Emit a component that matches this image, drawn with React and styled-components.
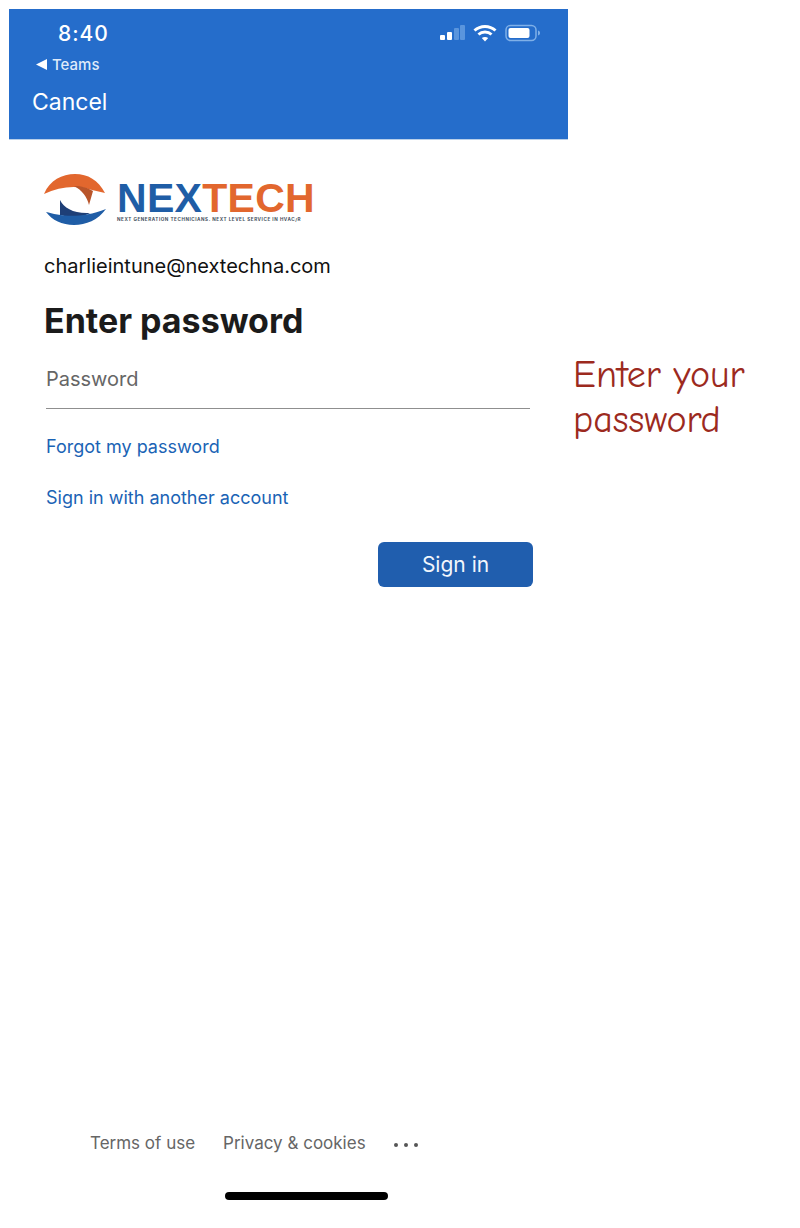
import React from "react";
import styled, { createGlobalStyle } from "styled-components";

const Global = createGlobalStyle`
  html, body { margin: 0; padding: 0; background: #fff; }
  body { font-family: Inter, "Liberation Sans", sans-serif; }
`;
const Page = styled.div`
  width: 800px; height: 1228px; box-sizing: border-box; padding: 9px 0 0 9px;
  display: flex; gap: 5px; overflow: hidden;
`;
const Phone = styled.main`
  width: 559px; flex: none; display: flex; flex-direction: column; height: 1219px;
`;
const Header = styled.header`
  height: 131px; flex: none; background: #256dcb; box-sizing: border-box;
  border-bottom: 1px solid #b9cfe9; color: #fff; display: grid;
  grid-template-rows: 33px 24px 40px; grid-template-columns: 1fr auto;
  padding: 10px 27px 0 0;
`;
const Time = styled.div`
  font-size: 21px; font-weight: 500; letter-spacing: 1px; line-height: 30px; padding-left: 49px;
`;
const StatusIcons = styled.div`
  display: flex; align-items: center; gap: 8px; height: 30px; margin-top: -1px;
`;
const Back = styled.div`
  grid-column: 1 / -1; display: flex; align-items: center; gap: 5px;
  padding-left: 27px; font-size: 15px; font-weight: 500; color: #dfeafa;
`;
const Cancel = styled.div`
  grid-column: 1 / -1; font-size: 23px; line-height: 40px; padding: 6px 0 0 23px; font-weight: 400;
`;
const Content = styled.section`
  flex: 1; display: flex; flex-direction: column; padding: 34px 0 0 35px;
`;
const Logo = styled.div`
  display: flex; gap: 11px; height: 53px; align-items: flex-start;
`;
const LogoText = styled.div`
  display: flex; flex-direction: column; padding-top: 5px;
`;
const Wordmark = styled.div`
  font-family: "Liberation Sans", sans-serif; font-weight: 700; font-size: 41px; line-height: 38px;
  letter-spacing: .3px; color: #1f5da6; white-space: nowrap;
`;
const Orange = styled.span`color: #e2672e;`;
const Tagline = styled.div`
  font-size: 4.6px; font-weight: 700; color: #45505e; letter-spacing: .55px; line-height: 6px; white-space: nowrap;
`;
const Email = styled.div`
  font-size: 20px; line-height: 28px; color: #111; margin-top: 25px;
`;
const Title = styled.h1`
  font-size: 34px; line-height: 42px; font-weight: 700; color: #1b1b1b; margin: 20px 0 0;
`;
const Field = styled.div`
  width: 484px; margin: 21px 0 0 2px; height: 46px; box-sizing: border-box; border-bottom: 1px solid #8f8f8f;
  color: #666; font-size: 20px; line-height: 30px; padding-top: 1px;
`;
const LinkText = styled.a`
  display: block; margin: ${p => p.$top}px 0 0 2px; color: #1a63b5; font-size: 18px; line-height: 26px;
`;
const Actions = styled.div`
  width: 489px; display: flex; justify-content: flex-end; margin-top: 31px;
`;
const SignIn = styled.button`
  width: 155px; height: 45px; border: 0; border-radius: 6px; background: #205eae; color: #f2f6fc;
  font: 400 21px Inter, sans-serif; padding: 0;
`;
const Footer = styled.footer`
  margin-top: auto; display: flex; align-items: center; padding: 0 0 0 46px;
  height: 30px; color: #666; font-size: 17px;
`;
const FooterLink = styled.span`margin-right: 28px;`;
const Dots = styled.div`
  display: flex; gap: 6px; margin-top: 3px;
  & > i { width: 4px; height: 4px; border-radius: 50%; background: #555; }
`;
const HomeArea = styled.div`
  height: 70px; flex: none; display: flex; justify-content: center; padding: 34px 180px 0 0;
  box-sizing: border-box; padding-left: 181px; justify-content: flex-start;
`;
const HomeBar = styled.div`
  width: 198px; height: 8px; border-radius: 4px; background: #000;
`;
const Note = styled.aside`
  font-family: "Comic Sans MS", "Comic Neue", "DejaVu Sans", sans-serif;
  color: #9c2a1e; font-size: 38px; line-height: 45px; padding-top: 344px; width: 220px;
`;

const Signal = () => (
  <svg width="26" height="18" viewBox="0 0 26 18" aria-hidden="true">
    <rect x="1" y="11" width="5" height="5" rx="1" fill="#fff" />
    <rect x="8" y="8" width="5" height="8" rx="1" fill="#fff" />
    <rect x="15" y="4" width="5" height="12" rx="1" fill="#5a95dd" />
    <rect x="21" y="1" width="5" height="15" rx="1" fill="#5a95dd" />
  </svg>
);
const Wifi = () => (
  <svg width="24" height="18" viewBox="0 0 24 18" fill="none" stroke="#fff" strokeWidth="3" aria-hidden="true">
    <path d="M1.5 6.5C7.5 1 16.5 1 22.5 6.5" />
    <path d="M5.5 10.5C9 7.3 15 7.3 18.5 10.5" />
    <path d="M12 17.5L8.8 14C10.6 12.6 13.4 12.6 15.2 14Z" fill="#fff" stroke="none" />
  </svg>
);
const Battery = () => (
  <svg width="36" height="18" viewBox="0 0 36 18" aria-hidden="true">
    <rect x="1" y="1.5" width="30" height="15" rx="4.5" fill="none" stroke="#7fb0e8" strokeWidth="1.5" />
    <rect x="3.5" y="4" width="21" height="10" rx="2" fill="#fff" />
    <path d="M33 6.5c1.6.4 2 1.4 2 2.5s-.4 2.1-2 2.5z" fill="#7fb0e8" />
  </svg>
);
const Mark = () => (
  <svg width="62" height="52" viewBox="0 0 62 52" aria-hidden="true">
    <path d="M0 20C6 6 18 0 31 0C44 0 54 6 61 19L48 16C34 11 16 12 0 20Z" fill="#e2672e" />
    <path d="M30 12C38 12 44 14 49 17L45 31C43 23 38 16 30 12Z" fill="#b9552a" />
    <path d="M16 26C20 34 30 40 46 39C38 44 26 44 16 41Z" fill="#1e3f77" />
    <path d="M2 38C14 41 34 46 62 35C54 46 42 51 30 51C18 51 8 46 2 38Z" fill="#1f5da6" />
  </svg>
);

export default function App() {
  return (
    <>
      <Global />
      <Page>
        <Phone>
          <Header>
            <Time>8:40</Time>
            <StatusIcons><Signal /><Wifi /><Battery /></StatusIcons>
            <Back>
              <svg width="11" height="11" viewBox="0 0 11 11" aria-hidden="true"><path d="M0 5.5L11 0V11Z" fill="#fff" /></svg>
              Teams
            </Back>
            <Cancel>Cancel</Cancel>
          </Header>
          <Content>
            <Logo>
              <Mark />
              <LogoText>
                <Wordmark>NEX<Orange>TECH</Orange></Wordmark>
                <Tagline>NEXT GENERATION TECHNICIANS. NEXT LEVEL SERVICE IN HVAC/R</Tagline>
              </LogoText>
            </Logo>
            <Email>charlieintune@nextechna.com</Email>
            <Title>Enter password</Title>
            <Field>Password</Field>
            <LinkText $top={25}>Forgot my password</LinkText>
            <LinkText $top={25}>Sign in with another account</LinkText>
            <Actions><SignIn>Sign in</SignIn></Actions>
            <Footer>
              <FooterLink>Terms of use</FooterLink>
              <FooterLink>Privacy &amp; cookies</FooterLink>
              <Dots><i /><i /><i /></Dots>
            </Footer>
            <HomeArea><HomeBar /></HomeArea>
          </Content>
        </Phone>
        <Note>Enter your password</Note>
      </Page>
    </>
  );
}
